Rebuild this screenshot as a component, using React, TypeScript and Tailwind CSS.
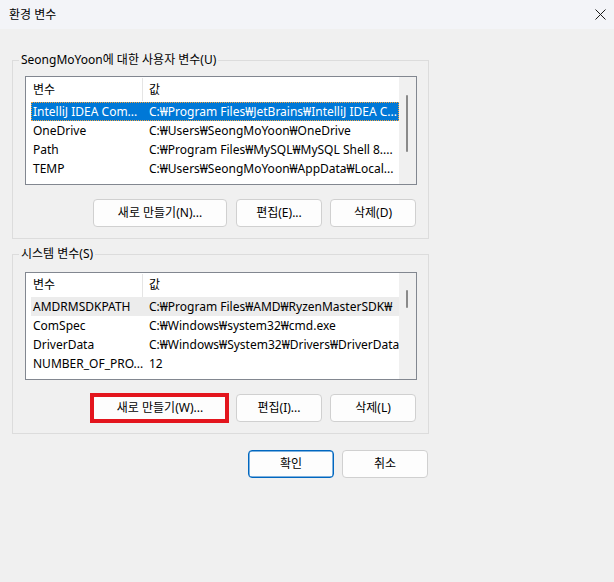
import React from "react";

type Row = { name: string; value: string; state?: "selected" | "hover" };

const userRows: Row[] = [
  { name: "IntelliJ IDEA Com...", value: "C:₩Program Files₩JetBrains₩IntelliJ IDEA C...", state: "selected" },
  { name: "OneDrive", value: "C:₩Users₩SeongMoYoon₩OneDrive" },
  { name: "Path", value: "C:₩Program Files₩MySQL₩MySQL Shell 8...." },
  { name: "TEMP", value: "C:₩Users₩SeongMoYoon₩AppData₩Local..." },
];

const systemRows: Row[] = [
  { name: "AMDRMSDKPATH", value: "C:₩Program Files₩AMD₩RyzenMasterSDK₩", state: "hover" },
  { name: "ComSpec", value: "C:₩Windows₩system32₩cmd.exe" },
  { name: "DriverData", value: "C:₩Windows₩System32₩Drivers₩DriverData" },
  { name: "NUMBER_OF_PRO...", value: "12" },
];

// ─── Title bar close glyph ──────────────────────────────────────────────────

function CloseIcon() {
  return (
    <svg width="11" height="11" viewBox="0 0 11 11" fill="none">
      <path d="M0.5 0.5L10.5 10.5M10.5 0.5L0.5 10.5" stroke="#1a1a1a" strokeWidth="1" />
    </svg>
  );
}

function WinButton({ label, width = "w-[86px]", primary = false, marked = false }: {
  label: string;
  width?: string;
  primary?: boolean;
  marked?: boolean;
}) {
  return (
    <button
      type="button"
      className={`relative h-[28px] ${width} rounded-[4px] border bg-[#fdfdfd] text-[12px] leading-[16px] text-black ${
        primary ? "border-[#0067c0] shadow-[inset_0_0_0_0.5px_#0067c0]" : "border-[#d0d0d0]"
      }`}
    >
      {label}
      {marked && (
        <span className="pointer-events-none absolute -left-[4px] -right-[3px] -top-[2px] -bottom-[2px] border-4 border-[#e3151d]" />
      )}
    </button>
  );
}

function ListBox({ rows, heightCls, headerCls, thumbCls }: {
  rows: Row[];
  heightCls: string;
  headerCls: string;
  thumbCls: string;
}) {
  return (
    <div className={`flex ${heightCls} w-[392px] border border-[#828790] bg-white`}>
      <div className="flex-1 overflow-hidden">
        {/* column header */}
        <div className={`flex ${headerCls}`}>
          <div className="flex w-[116px] items-center pl-[7px]">변수</div>
          <div className="mt-[1px] h-[23px] w-px bg-[#e5e5e5]" />
          <div className="flex items-center pl-[6px]">값</div>
        </div>
        {rows.map((r) => (
          <div
            key={r.name}
            className={`ml-[5px] flex h-[19px] items-center whitespace-nowrap ${
              r.state === "selected"
                ? "bg-[#0078d7] text-white outline-1 -outline-offset-1 outline-dotted outline-[#f6a33c]"
                : r.state === "hover"
                  ? "bg-[#ececec]"
                  : ""
            }`}
          >
            <div className="w-[112px] overflow-hidden pl-[2px]">{r.name}</div>
            <div className="flex-1 overflow-hidden pl-[6px]">{r.value}</div>
          </div>
        ))}
      </div>
      <div className="relative w-[17px] bg-[#f0f0f0]">
        <div className={`absolute left-[7px] w-[2px] rounded-full bg-[#8a8a8a] ${thumbCls}`} />
      </div>
    </div>
  );
}

export default function App() {
  return (
    <div className="flex h-[582px] w-[614px] flex-col bg-[#f0f0f0] font-['Noto_Sans','Noto_Sans_CJK_KR',sans-serif] text-[12px] leading-[16px] text-black">
      {/* Title bar */}
      <div className="flex h-[29px] items-center justify-between bg-[#f3f4f8] pl-[9px] pr-[8px]">
        <span className="text-[12px]">환경 변수</span>
        <CloseIcon />
      </div>

      <div className="w-[429px] pl-[12px]">
        {/* User variables */}
        <div className="relative mt-[31px] h-[179px] border border-[#dcdcdc] pl-[12px] pr-[11px] pt-[15px]">
          <span className="absolute -top-[9px] left-[6px] bg-[#f0f0f0] px-[2px] leading-[16px]">
            SeongMoYoon에 대한 사용자 변수(U)
          </span>
          <ListBox rows={userRows} heightCls="h-[109px]" headerCls="h-[25px]" thumbCls="top-[18px] h-[57px]" />
          <div className="mt-[14px] flex justify-end gap-[8px] pr-[1px]">
            <WinButton label="새로 만들기(N)..." width="w-[134px] mr-[1px]" />
            <WinButton label="편집(E)..." />
            <WinButton label="삭제(D)" />
          </div>
        </div>

        {/* System variables */}
        <div className="relative mt-[15px] h-[180px] border border-[#dcdcdc] pl-[12px] pr-[11px] pt-[17px]">
          <span className="absolute -top-[9px] left-[6px] bg-[#f0f0f0] px-[2px] leading-[16px]">
            시스템 변수(S)
          </span>
          <ListBox rows={systemRows} heightCls="h-[108px]" headerCls="h-[24px]" thumbCls="top-[17px] h-[18px]" />
          <div className="mt-[14px] flex justify-end gap-[8px] pr-[1px]">
            <WinButton label="새로 만들기(W)..." width="w-[134px] mr-[1px]" marked />
            <WinButton label="편집(I)..." />
            <WinButton label="삭제(L)" />
          </div>
        </div>

        {/* Dialog buttons */}
        <div className="mt-[16px] flex justify-end gap-[8px] pr-[1px]">
          <WinButton label="확인" primary />
          <WinButton label="취소" />
        </div>
      </div>
    </div>
  );
}
